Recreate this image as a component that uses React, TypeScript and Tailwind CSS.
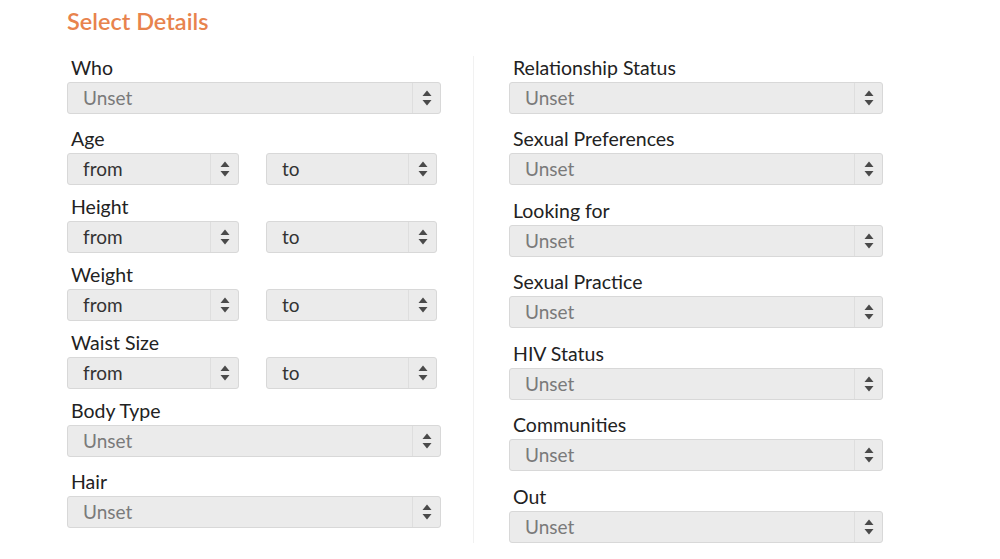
import React from 'react'

function Arrows() {
  return (
    <svg width="10" height="16" viewBox="0 0 10 16" className="block">
      <path d="M5 0.5 L9.5 6 L0.5 6 Z" fill="#4a4a4a" />
      <path d="M0.5 10 L9.5 10 L5 15.5 Z" fill="#4a4a4a" />
    </svg>
  )
}

function FakeSelect({ value, width, muted = true }: { value: string; width: string; muted?: boolean }) {
  return (
    <div
      className={`${width} h-[32px] flex items-stretch bg-[#ebebeb] border border-[#d8d8d8] rounded-[3px]`}
    >
      <div
        className={`flex-1 flex items-center pl-[15px] text-[19px] ${muted ? 'text-[#7a7a7a]' : 'text-[#333333]'}`}
      >
        {value}
      </div>
      <div className="w-[28px] flex items-center justify-center border-l border-[#dedede]">
        <Arrows />
      </div>
    </div>
  )
}

function Field({ label, mt, range = false }: { label: string; mt: string; range?: boolean }) {
  return (
    <div className={mt}>
      <div className="h-[24px] leading-[24px] mb-[2px] pl-[4px] text-[19.5px] text-[#222222]">{label}</div>
      {range ? (
        <div className="flex">
          <FakeSelect value="from" width="w-[172px]" muted={false} />
          <div className="ml-[27px]">
            <FakeSelect value="to" width="w-[171px]" muted={false} />
          </div>
        </div>
      ) : (
        <FakeSelect value="Unset" width="w-[374px]" />
      )}
    </div>
  )
}

export default function App() {
  return (
    <div className="bg-white min-h-[559px] w-[1000px] pl-[67px] pt-[6px] font-['Lato','Noto_Sans',sans-serif]">
      <h2 className="h-[30px] leading-[30px] text-[23.5px] font-semibold text-[#e8834d]">Select Details</h2>

      <div className="flex mt-[20px]">
        {/* Left column */}
        <div className="w-[407px] border-r border-[#f1f1f1] pb-[15px]">
          <Field label="Who" mt="mt-0" />
          <Field label="Age" mt="mt-[13px]" range />
          <Field label="Height" mt="mt-[10px]" range />
          <Field label="Weight" mt="mt-[10px]" range />
          <Field label="Waist Size" mt="mt-[10px]" range />
          <Field label="Body Type" mt="mt-[10px]" />
          <Field label="Hair" mt="mt-[13px]" />
        </div>

        {/* Right column */}
        <div className="pl-[35px]">
          <Field label="Relationship Status" mt="mt-0" />
          <Field label="Sexual Preferences" mt="mt-[13px]" />
          <Field label="Looking for" mt="mt-[14px]" />
          <Field label="Sexual Practice" mt="mt-[13px]" />
          <Field label="HIV Status" mt="mt-[14px]" />
          <Field label="Communities" mt="mt-[13px]" />
          <Field label="Out" mt="mt-[14px]" />
        </div>
      </div>
    </div>
  )
}
